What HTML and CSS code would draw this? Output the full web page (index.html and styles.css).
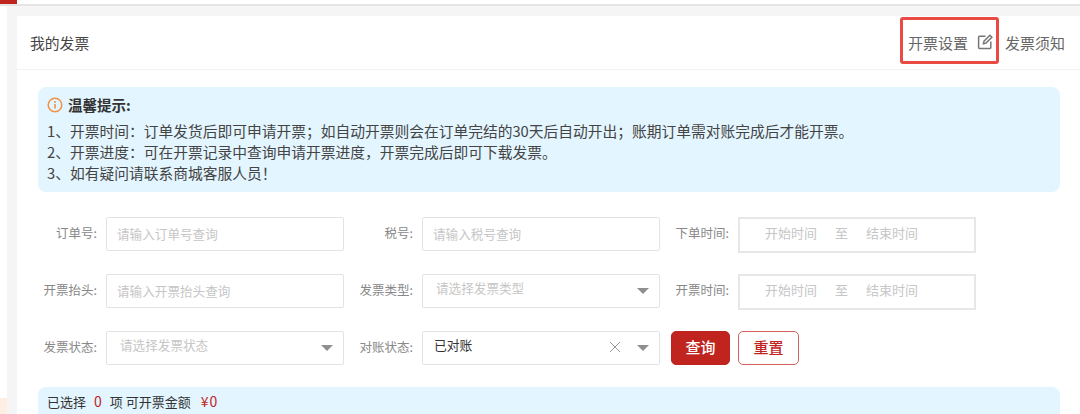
FILE: index.html
```html
<!DOCTYPE html>
<html lang="zh-CN">
<head>
<meta charset="utf-8">
<title>我的发票</title>
<link rel="stylesheet" href="styles.css">
</head>
<body>
<div class="topbar"><span class="tab"></span></div>
<div class="page">
  <aside class="rail"><span class="rail-mark"></span></aside>
  <main class="card">
    <header class="head">
      <h1 class="title">我的发票</h1>
      <div class="head-links">
        <a class="setting">开票设置
          <svg class="edit" width="16" height="16" viewBox="0 0 16 16" fill="none" stroke="#777" stroke-width="1.5"><path d="M8.500 2.200H2.600a1 1 0 0 0-1 1v10.200a1 1 0 0 0 1 1h10.200a1 1 0 0 0 1-1V7.500"/><path d="M6.400 9.800l.6-2.700L12.900 1.200l2 2-5.900 5.900z"/></svg>
        </a>
        <a class="notice">发票须知</a>
      </div>
    </header>
    <div class="body">
      <section class="alert">
        <div class="alert-title">
          <svg width="16" height="16" viewBox="0 0 16 16" fill="none"><circle cx="8" cy="8" r="6.800" stroke="#f0934a" stroke-width="1.500"/><path d="M8 7v4.400" stroke="#f0934a" stroke-width="1.600"/><circle cx="8" cy="4.900" r="1" fill="#f0934a"/></svg>
          <strong>温馨提示:</strong>
        </div>
        <p>1、开票时间：订单发货后即可申请开票；如自动开票则会在订单完结的30天后自动开出；账期订单需对账完成后才能开票。</p>
        <p>2、开票进度：可在开票记录中查询申请开票进度，开票完成后即可下载发票。</p>
        <p>3、如有疑问请联系商城客服人员！</p>
      </section>
      <form class="filters">
        <label class="lab">订单号:</label>
        <div class="field"><span class="ph">请输入订单号查询</span></div>
        <label class="lab">税号:</label>
        <div class="field"><span class="ph">请输入税号查询</span></div>
        <label class="lab">下单时间:</label>
        <div class="field date"><span class="ph">开始时间</span><span class="ph">至</span><span class="ph">结束时间</span></div>

        <label class="lab">开票抬头:</label>
        <div class="field"><span class="ph">请输入开票抬头查询</span></div>
        <label class="lab">发票类型:</label>
        <div class="field select"><span class="ph sel">请选择发票类型</span><i class="caret"></i></div>
        <label class="lab">开票时间:</label>
        <div class="field date"><span class="ph">开始时间</span><span class="ph">至</span><span class="ph">结束时间</span></div>

        <label class="lab">发票状态:</label>
        <div class="field select"><span class="ph sel">请选择发票状态</span><i class="caret"></i></div>
        <label class="lab">对账状态:</label>
        <div class="field select"><span class="val">已对账</span>
          <svg class="clear" width="12" height="12" viewBox="0 0 12 12" fill="none" stroke="#9a9a9a" stroke-width="1"><path d="M1 1l10 10M11 1L1 11"/></svg>
          <i class="caret"></i></div>
        <div class="actions">
          <button type="button" class="btn primary">查询</button>
          <button type="button" class="btn ghost">重置</button>
        </div>
      </form>
      <section class="summary">已选择<b>0</b>项 可开票金额<b class="money">¥0</b></section>
    </div>
  </main>
</div>
</body>
</html>
```
FILE: styles.css
```css
* { box-sizing: border-box; }
html, body { margin: 0; height: 414px; overflow: hidden; background: #f5f5f5; }
body { font-family: "Noto Sans CJK SC", "Liberation Sans", sans-serif; color: #333; }
.topbar { height: 6px; background: #fff; border-bottom: 2px solid #e6e6e6; }
.tab { display: block; width: 17px; height: 4px; background: #c0241f; }
.page { display: flex; height: 408px; padding-top: 10px; }
.rail { width: 7px; margin-top: -10px; margin-right: 10px; background: #fff; display: flex; align-items: flex-end; }
.rail-mark { display: block; width: 7px; height: 16px; background: #ffeee3; }
.card { flex: 1; background: #fff; min-width: 0; }
.head { height: 54px; border-bottom: 1px solid #f2f2f2; display: flex; align-items: flex-start; justify-content: space-between; padding: 1px 15px 0 13px; }
.title { margin: 12px 0 0; font-size: 14.800px; line-height: 28px; font-weight: 400; color: #444; }
.head-links { display: flex; align-items: flex-start; font-size: 15px; color: #666; }
.setting { width: 99px; height: 47px; border: 3px solid #e94a44; border-radius: 3px; display: flex; align-items: center; padding: 4px 0 0 5px; gap: 9px; }
.edit { margin-top: -2px; }
.notice { margin: 12px 0 0 6px; line-height: 28px; }
.body { padding: 17px 20px 0 21px; }
.alert { height: 105px; background: #e3f5fe; border-radius: 8px; padding: 7px 10px 0 9px; font-size: 14.750px; line-height: 21px; color: #444; }
.alert-title { display: flex; align-items: center; gap: 5px; height: 21px; margin-bottom: 5px; }
.alert-title strong { font-size: 14.500px; color: #333; }
.alert p { margin: 0; }
.filters { display: grid; grid-template-columns: 68px 238px 78px 238px 78px 238px; grid-auto-rows: 34px; row-gap: 23px; align-items: stretch; margin-top: 25px; }
.lab { font-size: 12.500px; color: #888; text-align: right; line-height: 32px; padding-right: 9px; white-space: nowrap; }
.field { border: 1px solid #e3e3e3; border-radius: 2px; display: flex; align-items: center; padding: 0 10px; background: #fff; }
.ph { font-size: 12.600px; color: #c6c6c6; white-space: nowrap; margin-top: -2px; }
.sel { margin-left: 3px; margin-top: -7px; }
.val { font-size: 12.800px; color: #333; margin-top: -8px; margin-left: 1px; }
.select { position: relative; }
.caret { position: absolute; right: 10px; top: 13px; width: 0; height: 0; border-left: 6px solid transparent; border-right: 6px solid transparent; border-top: 6px solid #8f8f8f; }
.clear { position: absolute; right: 38px; top: 9px; }
.date { height: 36px; border: 2px solid #e7e7e7; border-radius: 0; padding: 0 0 4px 25px; gap: 18px; }
.date .ph { font-size: 13px; }
.actions { grid-column: 5 / 7; display: flex; gap: 8px; margin-left: 11px; }
.btn { height: 34px; border-radius: 5px; font-family: inherit; font-size: 15px; font-weight: 500; padding: 0 0 4px; cursor: pointer; }
.primary { width: 59px; background: #c0241f; border: 1px solid #c0241f; color: #fff; }
.ghost { width: 61px; background: #fff; border: 1px solid #d3605c; color: #c0241f; }
.summary { height: 40px; margin-top: 22px; background: #e3f5fe; border-radius: 8px; padding: 5px 0 0 9px; font-size: 13px; line-height: 19px; color: #333; }
.summary b { font-weight: 400; color: #c0241f; margin: 0 8px; font-size: 14px; }
.summary .money { margin-left: 10px; letter-spacing: 1px; }
```
